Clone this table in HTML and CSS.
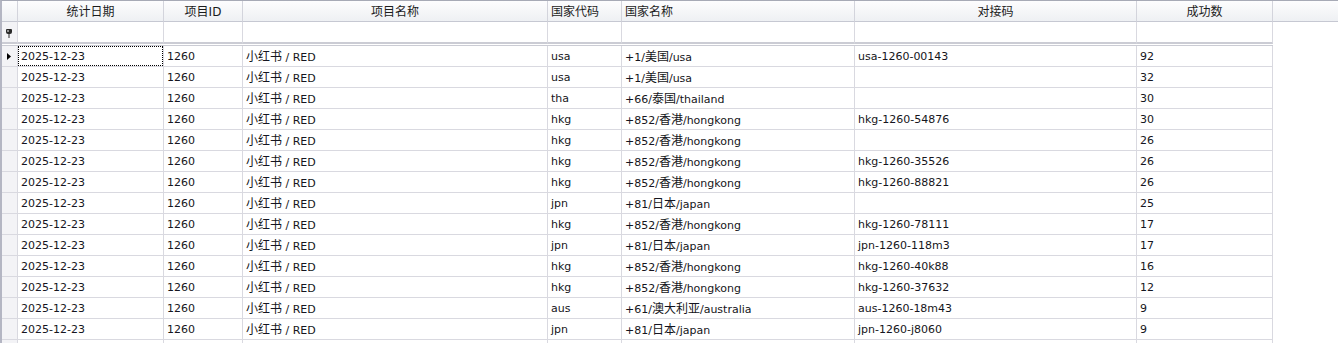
FILE: index.html
```html
<!DOCTYPE html>
<html lang="zh">
<head>
<meta charset="utf-8">
<title>Grid</title>
<link rel="stylesheet" href="styles.css">
</head>
<body>
<div class="grid">
  <div class="row hdr">
    <div class="c w0"></div>
    <div class="c w1">统计日期</div>
    <div class="c w2">项目ID</div>
    <div class="c w3">项目名称</div>
    <div class="c w4 left">国家代码</div>
    <div class="c w5 left">国家名称</div>
    <div class="c w6">对接码</div>
    <div class="c w7">成功数</div>
    <div class="c fill"></div>
  </div>
  <div class="row flt">
    <div class="c w0 ind"><svg class="pin" width="6" height="9" viewBox="0 0 6 9"><path d="M1 0h4a1 1 0 0 1 1 1v2a2 2 0 0 1-2 2H2A2 2 0 0 1 0 3V1a1 1 0 0 1 1-1z" fill="#2a2a2a"/><rect x="1.5" y="1" width="1" height="2" fill="#fff"/><rect x="2.5" y="5" width="1" height="4" fill="#2a2a2a"/></svg></div>
    <div class="c w1"></div><div class="c w2"></div><div class="c w3"></div><div class="c w4"></div><div class="c w5"></div><div class="c w6"></div><div class="c w7"></div>
  </div>
  <div class="sep"></div>
  <div class="body">
    <div class="row">
      <div class="c w0 ind"><svg class="arrow" width="4" height="7" viewBox="0 0 4 7"><path d="M0 0L4 3.5L0 7Z" fill="#000"/></svg></div>
      <div class="c w1 focus">2025-12-23</div><div class="c w2">1260</div><div class="c w3"><span class="zh">小红书</span> / RED</div><div class="c w4">usa</div><div class="c w5">+1/<span class="zh">美国</span>/usa</div><div class="c w6">usa-1260-00143</div><div class="c w7">92</div>
    </div>
    <div class="row">
      <div class="c w0 ind"></div>
      <div class="c w1">2025-12-23</div><div class="c w2">1260</div><div class="c w3"><span class="zh">小红书</span> / RED</div><div class="c w4">usa</div><div class="c w5">+1/<span class="zh">美国</span>/usa</div><div class="c w6"></div><div class="c w7">32</div>
    </div>
    <div class="row">
      <div class="c w0 ind"></div>
      <div class="c w1">2025-12-23</div><div class="c w2">1260</div><div class="c w3"><span class="zh">小红书</span> / RED</div><div class="c w4">tha</div><div class="c w5">+66/<span class="zh">泰国</span>/thailand</div><div class="c w6"></div><div class="c w7">30</div>
    </div>
    <div class="row">
      <div class="c w0 ind"></div>
      <div class="c w1">2025-12-23</div><div class="c w2">1260</div><div class="c w3"><span class="zh">小红书</span> / RED</div><div class="c w4">hkg</div><div class="c w5">+852/<span class="zh">香港</span>/hongkong</div><div class="c w6">hkg-1260-54876</div><div class="c w7">30</div>
    </div>
    <div class="row">
      <div class="c w0 ind"></div>
      <div class="c w1">2025-12-23</div><div class="c w2">1260</div><div class="c w3"><span class="zh">小红书</span> / RED</div><div class="c w4">hkg</div><div class="c w5">+852/<span class="zh">香港</span>/hongkong</div><div class="c w6"></div><div class="c w7">26</div>
    </div>
    <div class="row">
      <div class="c w0 ind"></div>
      <div class="c w1">2025-12-23</div><div class="c w2">1260</div><div class="c w3"><span class="zh">小红书</span> / RED</div><div class="c w4">hkg</div><div class="c w5">+852/<span class="zh">香港</span>/hongkong</div><div class="c w6">hkg-1260-35526</div><div class="c w7">26</div>
    </div>
    <div class="row">
      <div class="c w0 ind"></div>
      <div class="c w1">2025-12-23</div><div class="c w2">1260</div><div class="c w3"><span class="zh">小红书</span> / RED</div><div class="c w4">hkg</div><div class="c w5">+852/<span class="zh">香港</span>/hongkong</div><div class="c w6">hkg-1260-88821</div><div class="c w7">26</div>
    </div>
    <div class="row">
      <div class="c w0 ind"></div>
      <div class="c w1">2025-12-23</div><div class="c w2">1260</div><div class="c w3"><span class="zh">小红书</span> / RED</div><div class="c w4">jpn</div><div class="c w5">+81/<span class="zh">日本</span>/japan</div><div class="c w6"></div><div class="c w7">25</div>
    </div>
    <div class="row">
      <div class="c w0 ind"></div>
      <div class="c w1">2025-12-23</div><div class="c w2">1260</div><div class="c w3"><span class="zh">小红书</span> / RED</div><div class="c w4">hkg</div><div class="c w5">+852/<span class="zh">香港</span>/hongkong</div><div class="c w6">hkg-1260-78111</div><div class="c w7">17</div>
    </div>
    <div class="row">
      <div class="c w0 ind"></div>
      <div class="c w1">2025-12-23</div><div class="c w2">1260</div><div class="c w3"><span class="zh">小红书</span> / RED</div><div class="c w4">jpn</div><div class="c w5">+81/<span class="zh">日本</span>/japan</div><div class="c w6">jpn-1260-118m3</div><div class="c w7">17</div>
    </div>
    <div class="row">
      <div class="c w0 ind"></div>
      <div class="c w1">2025-12-23</div><div class="c w2">1260</div><div class="c w3"><span class="zh">小红书</span> / RED</div><div class="c w4">hkg</div><div class="c w5">+852/<span class="zh">香港</span>/hongkong</div><div class="c w6">hkg-1260-40k88</div><div class="c w7">16</div>
    </div>
    <div class="row">
      <div class="c w0 ind"></div>
      <div class="c w1">2025-12-23</div><div class="c w2">1260</div><div class="c w3"><span class="zh">小红书</span> / RED</div><div class="c w4">hkg</div><div class="c w5">+852/<span class="zh">香港</span>/hongkong</div><div class="c w6">hkg-1260-37632</div><div class="c w7">12</div>
    </div>
    <div class="row">
      <div class="c w0 ind"></div>
      <div class="c w1">2025-12-23</div><div class="c w2">1260</div><div class="c w3"><span class="zh">小红书</span> / RED</div><div class="c w4">aus</div><div class="c w5">+61/<span class="zh">澳大利亚</span>/australia</div><div class="c w6">aus-1260-18m43</div><div class="c w7">9</div>
    </div>
    <div class="row">
      <div class="c w0 ind"></div>
      <div class="c w1">2025-12-23</div><div class="c w2">1260</div><div class="c w3"><span class="zh">小红书</span> / RED</div><div class="c w4">jpn</div><div class="c w5">+81/<span class="zh">日本</span>/japan</div><div class="c w6">jpn-1260-j8060</div><div class="c w7">9</div>
    </div>
    <div class="row">
      <div class="c w0 ind"></div>
      <div class="c w1"></div><div class="c w2"></div><div class="c w3"></div><div class="c w4"></div><div class="c w5"></div><div class="c w6"></div><div class="c w7"></div>
    </div>
  </div>
</div>
</body>
</html>
```
FILE: styles.css
```css
html, body {
  margin: 0;
  padding: 0;
  overflow: hidden;
  background: #ffffff;
}
body {
  font-family: "DejaVu Sans", "Noto Sans CJK SC", sans-serif;
  font-size: 11px;
  color: #151520;
}
.grid {
  border-left: 2px solid #b4b6c3;
  border-top: 1px solid #a7aab6;
}
.row {
  display: flex;
}
.c {
  box-sizing: border-box;
  height: 21px;
  line-height: 20px;
  padding: 1px 3px 0;
  border-right: 1px solid #d9d9e0;
  border-bottom: 1px solid #d9d9e0;
  white-space: nowrap;
  overflow: hidden;
  flex: none;
}
.w0 { width: 16px; padding: 0; }
.w1 { width: 146px; }
.w2 { width: 79px; }
.w3 { width: 305px; }
.w4 { width: 74px; }
.w5 { width: 233px; }
.w6 { width: 282px; }
.w7 { width: 136px; }
.fill { flex: 1; border-right: none; }

.zh { font-size: 12px; }

.hdr .c {
  background: linear-gradient(#fdfdfe, #eef0f3);
  border-right-color: #d3d4dc;
  border-bottom-color: #c6c8d2;
  text-align: center;
  font-size: 12px;
  color: #1c1c1c;
}
.hdr .left { text-align: left; }

.flt .c {
  height: 22px;
  border-bottom: 2px solid #cbccd4;
}
.sep {
  width: 1271px;
  height: 2px;
  box-sizing: border-box;
  border-top: 1px solid #ffffff;
  border-bottom: 1px solid #cbccd4;
}
.ind {
  background: #f3f3f6;
  display: flex;
  align-items: center;
}
.pin { margin: 2px 0 0 4px; }
.arrow { margin-left: 5px; }
.focus { position: relative; }
.focus::after {
  content: "";
  position: absolute;
  top: 0;
  left: 0;
  right: 0;
  bottom: 0;
  border: 1px dotted #000;
}
```
